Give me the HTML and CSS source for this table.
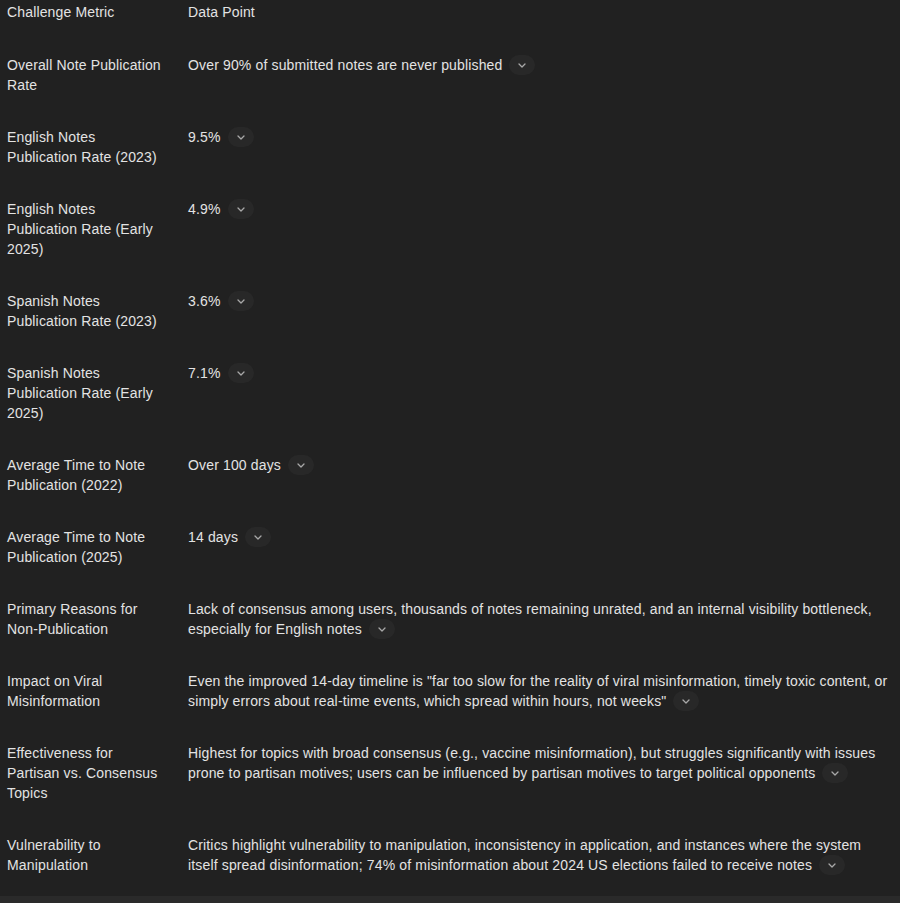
FILE: index.html
```html
<!DOCTYPE html>
<html>
<head>
<meta charset="utf-8">
<link rel="stylesheet" href="styles.css">
</head>
<body>
<table class="data">
  <thead>
    <tr><th class="metric">Challenge Metric</th><th class="value">Data Point</th></tr>
  </thead>
  <tbody>
    <tr><td class="metric">Overall Note Publication Rate</td><td class="value">Over 90% of submitted notes are never published<span class="chip"><svg viewBox="0 0 8 5" width="8" height="5"><path d="M1 1l3 3 3-3" fill="none" stroke="currentColor" stroke-width="1.3" stroke-linecap="round" stroke-linejoin="round"/></svg></span></td></tr>
    <tr><td class="metric">English Notes Publication Rate (2023)</td><td class="value">9.5%<span class="chip"><svg viewBox="0 0 8 5" width="8" height="5"><path d="M1 1l3 3 3-3" fill="none" stroke="currentColor" stroke-width="1.3" stroke-linecap="round" stroke-linejoin="round"/></svg></span></td></tr>
    <tr><td class="metric">English Notes Publication Rate (Early 2025)</td><td class="value">4.9%<span class="chip"><svg viewBox="0 0 8 5" width="8" height="5"><path d="M1 1l3 3 3-3" fill="none" stroke="currentColor" stroke-width="1.3" stroke-linecap="round" stroke-linejoin="round"/></svg></span></td></tr>
    <tr><td class="metric">Spanish Notes Publication Rate (2023)</td><td class="value">3.6%<span class="chip"><svg viewBox="0 0 8 5" width="8" height="5"><path d="M1 1l3 3 3-3" fill="none" stroke="currentColor" stroke-width="1.3" stroke-linecap="round" stroke-linejoin="round"/></svg></span></td></tr>
    <tr><td class="metric">Spanish Notes Publication Rate (Early 2025)</td><td class="value">7.1%<span class="chip"><svg viewBox="0 0 8 5" width="8" height="5"><path d="M1 1l3 3 3-3" fill="none" stroke="currentColor" stroke-width="1.3" stroke-linecap="round" stroke-linejoin="round"/></svg></span></td></tr>
    <tr><td class="metric">Average Time to Note Publication (2022)</td><td class="value">Over 100 days<span class="chip"><svg viewBox="0 0 8 5" width="8" height="5"><path d="M1 1l3 3 3-3" fill="none" stroke="currentColor" stroke-width="1.3" stroke-linecap="round" stroke-linejoin="round"/></svg></span></td></tr>
    <tr><td class="metric">Average Time to Note Publication (2025)</td><td class="value">14 days<span class="chip"><svg viewBox="0 0 8 5" width="8" height="5"><path d="M1 1l3 3 3-3" fill="none" stroke="currentColor" stroke-width="1.3" stroke-linecap="round" stroke-linejoin="round"/></svg></span></td></tr>
    <tr><td class="metric">Primary Reasons for Non-Publication</td><td class="value">Lack of consensus among users, thousands of notes remaining unrated, and an internal visibility bottleneck, especially for English notes<span class="chip"><svg viewBox="0 0 8 5" width="8" height="5"><path d="M1 1l3 3 3-3" fill="none" stroke="currentColor" stroke-width="1.3" stroke-linecap="round" stroke-linejoin="round"/></svg></span></td></tr>
    <tr><td class="metric">Impact on Viral Misinformation</td><td class="value">Even the improved 14-day timeline is "far too slow for the reality of viral misinformation, timely toxic content, or simply errors about real-time events, which spread within hours, not weeks"<span class="chip"><svg viewBox="0 0 8 5" width="8" height="5"><path d="M1 1l3 3 3-3" fill="none" stroke="currentColor" stroke-width="1.3" stroke-linecap="round" stroke-linejoin="round"/></svg></span></td></tr>
    <tr><td class="metric">Effectiveness for Partisan vs. Consensus Topics</td><td class="value">Highest for topics with broad consensus (e.g., vaccine misinformation), but struggles significantly with issues prone to partisan motives; users can be influenced by partisan motives to target political opponents<span class="chip"><svg viewBox="0 0 8 5" width="8" height="5"><path d="M1 1l3 3 3-3" fill="none" stroke="currentColor" stroke-width="1.3" stroke-linecap="round" stroke-linejoin="round"/></svg></span></td></tr>
    <tr><td class="metric">Vulnerability to Manipulation</td><td class="value">Critics highlight vulnerability to manipulation, inconsistency in application, and instances where the system itself spread disinformation; 74% of misinformation about 2024 US elections failed to receive notes<span class="chip"><svg viewBox="0 0 8 5" width="8" height="5"><path d="M1 1l3 3 3-3" fill="none" stroke="currentColor" stroke-width="1.3" stroke-linecap="round" stroke-linejoin="round"/></svg></span></td></tr>
  </tbody>
</table>
<div class="edge"></div>
</body>
</html>
```

FILE: styles.css
```css
html, body {
  margin: 0;
  padding: 0;
  background: #212121;
}
body {
  color: #e3e3e3;
  font-family: "Liberation Sans", Arial, sans-serif;
  font-size: 14px;
  letter-spacing: 0.15px;
  line-height: 20px;
  overflow: hidden;
  height: 903px;
  display: flex;
  flex-direction: column;
}
.data {
  border-collapse: collapse;
  width: 900px;
  table-layout: fixed;
}
.data th,
.data td {
  text-align: left;
  font-weight: normal;
  vertical-align: top;
  padding: 16px 0 16px 0;
}
.data thead th {
  padding-top: 2px;
  padding-bottom: 17px;
}
.data .metric {
  width: 158px;
  padding-left: 7px;
  padding-right: 23px;
}
.data .value {
  padding-right: 7px;
}
.chip {
  display: inline-flex;
  align-items: center;
  justify-content: center;
  width: 26px;
  height: 20px;
  border-radius: 10px;
  background: #282828;
  color: #a8a8a8;
  margin-left: 7px;
  vertical-align: top;
}
.chip svg {
  display: block;
}
.edge {
  flex: 1;
  margin-top: 5px;
  background: #2a2a2a;
}
```
